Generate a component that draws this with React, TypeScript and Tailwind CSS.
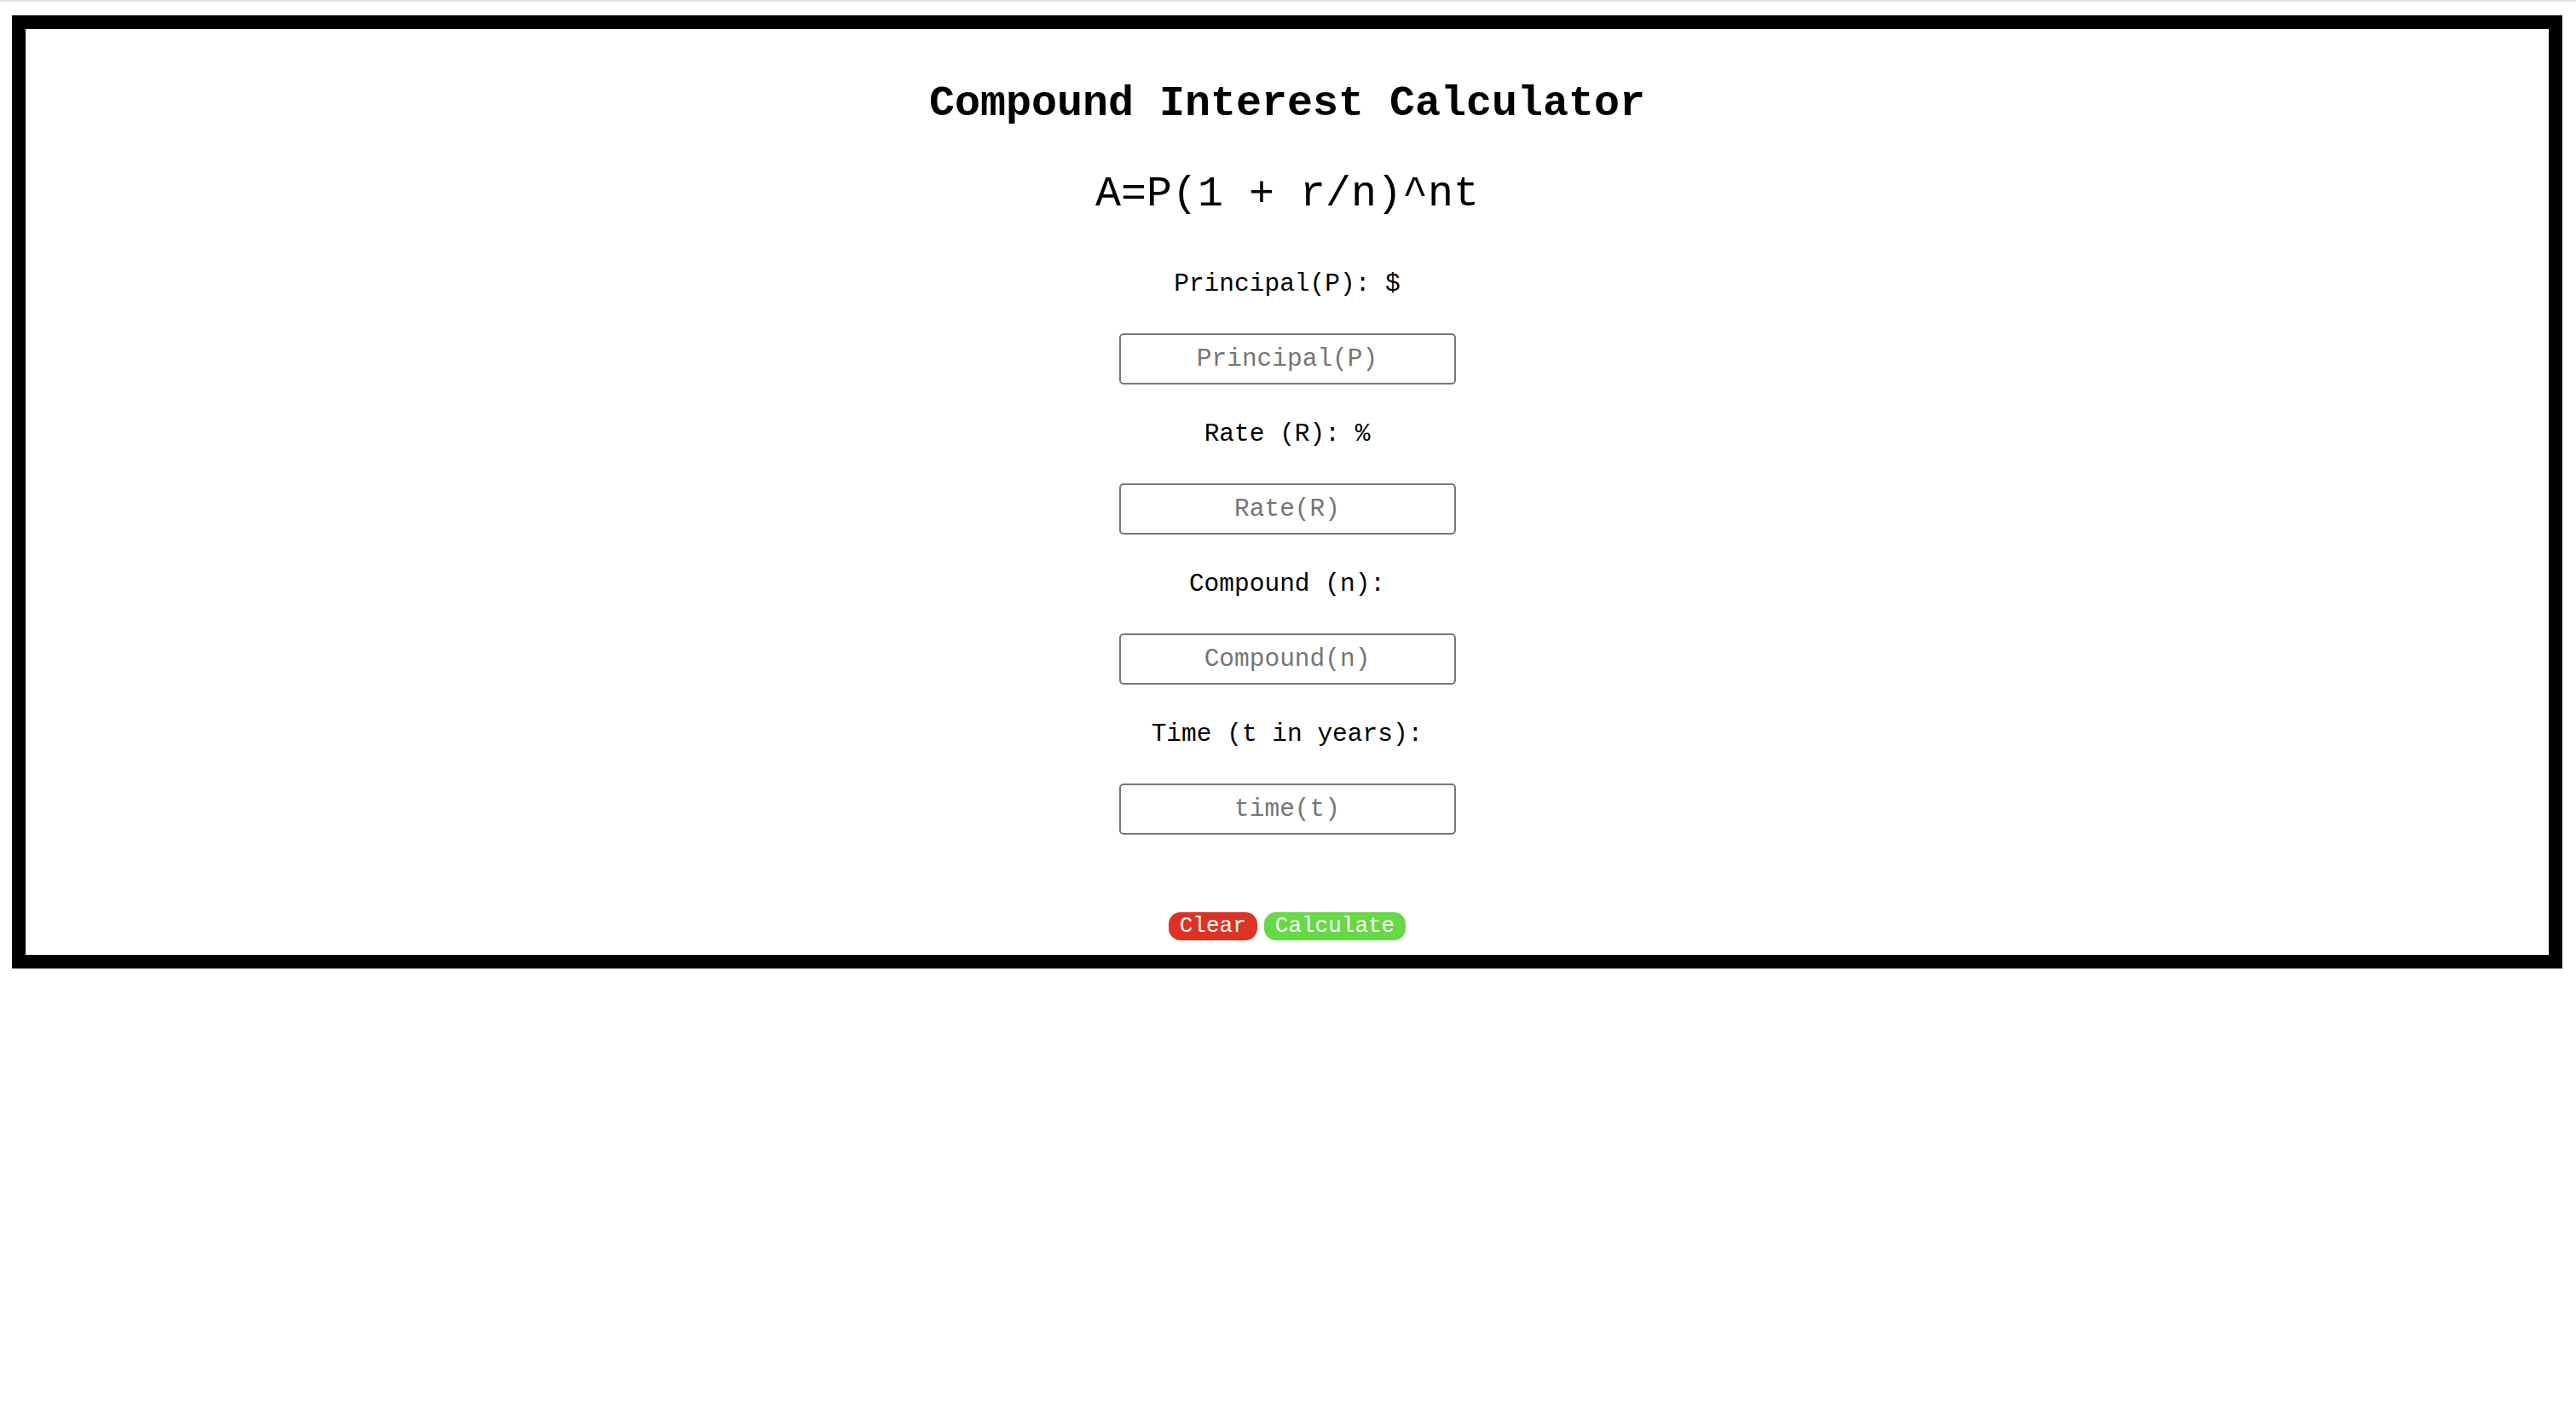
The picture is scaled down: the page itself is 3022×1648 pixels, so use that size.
import { useState } from "react";

const fields = [
  { label: "Principal(P): $", placeholder: "Principal(P)", key: "p" },
  { label: "Rate (R): %", placeholder: "Rate(R)", key: "r" },
  { label: "Compound (n):", placeholder: "Compound(n)", key: "n" },
  { label: "Time (t in years):", placeholder: "time(t)", key: "t" },
];

export default function App() {
  const [values, setValues] = useState<Record<string, string>>({ p: "", r: "", n: "", t: "" });

  return (
    <div className="min-h-screen bg-white font-['Courier_New','Nimbus_Mono_PS','FreeMono','Liberation_Mono',monospace] text-black">
      <div className="h-[2px] w-full bg-[#e3e3e3]" />
      <div className="ml-[14px] mr-[16px] mt-[16px] border-[16px] border-black bg-white">
        <div className="flex flex-col items-center pt-[58px] pb-[17px]">
          <h1 className="text-[50px] leading-[60px] font-bold">Compound Interest Calculator</h1>
          <p className="mt-[46px] text-[50px] leading-[60px] whitespace-pre">A=P(1 + r/n)^nt</p>

          <div className="mt-[57px] flex flex-col items-center">
            {fields.map((f, i) => (
              <div key={f.key} className={`flex flex-col items-center ${i > 0 ? "mt-[40px]" : ""}`}>
                <label className="text-[29.5px] leading-[36px] whitespace-pre">{f.label}</label>
                <input
                  value={values[f.key]}
                  onChange={e => setValues({ ...values, [f.key]: e.target.value })}
                  placeholder={f.placeholder}
                  className="mt-[40px] h-[60px] w-[395px] rounded-[5px] border-2 border-[#767676] bg-white text-center text-[29.5px] outline-none placeholder:text-[#757575]"
                />
              </div>
            ))}
          </div>

          <div className="mt-[91px] flex gap-2">
            <button className="h-[33px] rounded-[14px] bg-[#de3224] px-[13px] text-[26px] leading-[33px] text-white">Clear</button>
            <button className="h-[33px] rounded-[14px] bg-[#66d944] px-[13px] text-[26px] leading-[33px] text-white">Calculate</button>
          </div>
        </div>
      </div>
    </div>
  );
}
